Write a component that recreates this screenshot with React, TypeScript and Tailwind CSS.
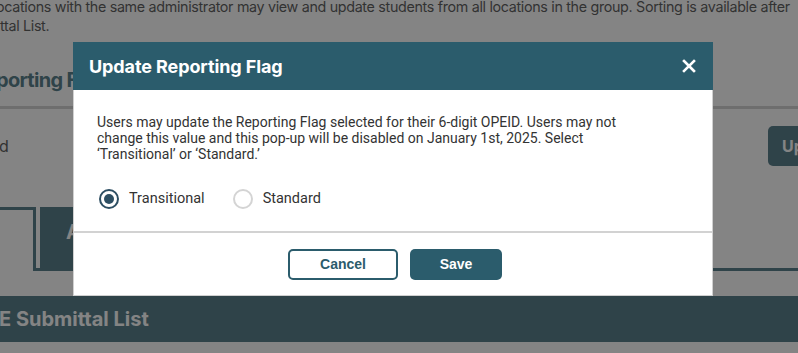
import React from "react";

function CloseIcon() {
  return (
    <svg width="14" height="14" viewBox="0 0 14 14" fill="none" aria-hidden="true">
      <path d="M2 2L12 12M12 2L2 12" stroke="white" strokeWidth="2.6" strokeLinecap="square" />
    </svg>
  );
}

function Radio({ checked, label }: { checked: boolean; label: string }) {
  return (
    <label className="flex items-center gap-[10px] cursor-pointer">
      <span
        className={
          checked
            ? "w-[20px] h-[20px] rounded-full border-2 border-[#2d4e62] flex items-center justify-center bg-white"
            : "w-[20px] h-[20px] rounded-full border-2 border-[#d4d4d4] flex items-center justify-center bg-white"
        }
      >
        {checked && <span className="w-[10px] h-[10px] rounded-full bg-[#2d4e62]" />}
      </span>
      <span className="text-[14.5px] leading-[20px] text-[#333] font-['Roboto',sans-serif]">{label}</span>
    </label>
  );
}

export default function App() {
  return (
    <div className="relative w-[798px] h-[353px] overflow-hidden bg-white font-['Inter',sans-serif]">
      {/* Underlying page */}
      <div className="flex flex-col">
        <div className="-mt-[3px] -ml-[4px] whitespace-nowrap text-[14.3px] leading-[19px] text-[#333] tracking-[-0.32px]">
          ocations with the same administrator may view and update students from all locations in the group. Sorting is available after
        </div>
        <div className="whitespace-nowrap text-[14.3px] leading-[19px] text-[#333] tracking-[-0.32px]">ttal List.</div>
        <div className="mt-[30px] -ml-[4px] whitespace-nowrap text-[20px] leading-[30px] font-bold text-[#2b5c6c] tracking-[-0.7px]">
          porting Flag
        </div>
        <div className="mt-[11px] h-[3px] bg-[#c8c8c8]" />
        <div className="mt-[17px] flex items-center justify-between">
          <span className="text-[16px] text-[#333] -ml-[1px]">d</span>
          <button className="h-[40px] w-[110px] -mr-[80px] rounded-[5px] bg-[#2b5c6c] text-white text-[16px] font-bold text-left pl-[14px]">
            Update
          </button>
        </div>
        <div className="mt-[41px] flex h-[64px]">
          <div className="w-[36px] h-[64px] bg-white border-t-[3px] border-r-[3px] border-[#2b5c6c]" />
          <div className="flex-1 flex border-b-[3px] border-[#2b5c6c] -ml-[3px] pl-[7px]">
            <div className="w-[200px] h-[61px] bg-[#2b5c6c] pl-[26px] pt-[13px] text-white text-[20px] leading-[24px] font-bold">
              Awards
            </div>
          </div>
        </div>
        <div className="mt-[25px] h-[46px] bg-[#2b5c6c] flex items-center">
          <span className="-ml-[1px] text-white text-[20px] font-bold whitespace-nowrap">E Submittal List</span>
        </div>
      </div>

      {/* Overlay */}
      <div className="absolute inset-0 bg-[rgba(50,50,50,0.6)]" />

      {/* Modal */}
      <div className="absolute left-[73px] top-[42px] w-[640px] bg-white border border-[#d0d0d0] border-t-0 flex flex-col">
        <div className="h-[48px] -mx-px bg-[#2b5c6c] flex items-center justify-between pl-[16px] pr-[17px]">
          <h2 className="text-white text-[18px] font-bold tracking-[-0.1px]">Update Reporting Flag</h2>
          <button className="w-[14px] h-[14px] flex items-center justify-center" aria-label="Close">
            <CloseIcon />
          </button>
        </div>
        <div className="px-[23px] pt-[24px] pb-[22px]">
          <p className="text-[14px] leading-[16px] text-[#333] font-['Roboto',sans-serif]">
            Users may update the Reporting Flag selected for their 6-digit OPEID. Users may not
            <br />
            change this value and this pop-up will be disabled on January 1st, 2025. Select
            <br />
            ‘Transitional’ or ‘Standard.’
          </p>
          <div className="mt-[27px] flex items-center gap-[28px] pl-[2px]">
            <Radio checked label="Transitional" />
            <Radio checked={false} label="Standard" />
          </div>
        </div>
        <div className="h-[2px] bg-[#d2d2d2]" />
        <div className="flex justify-center gap-[12px] pt-[16px] pb-[15px] pl-[4px]">
          <button className="w-[110px] h-[31px] rounded-[5px] border-2 border-[#2b5c6c] bg-white text-[#2b5c6c] text-[14px] font-bold font-['Liberation_Sans',sans-serif]">
            Cancel
          </button>
          <button className="w-[92px] h-[31px] rounded-[5px] bg-[#2b5c6c] text-white text-[14px] font-bold font-['Liberation_Sans',sans-serif]">
            Save
          </button>
        </div>
      </div>
    </div>
  );
}
